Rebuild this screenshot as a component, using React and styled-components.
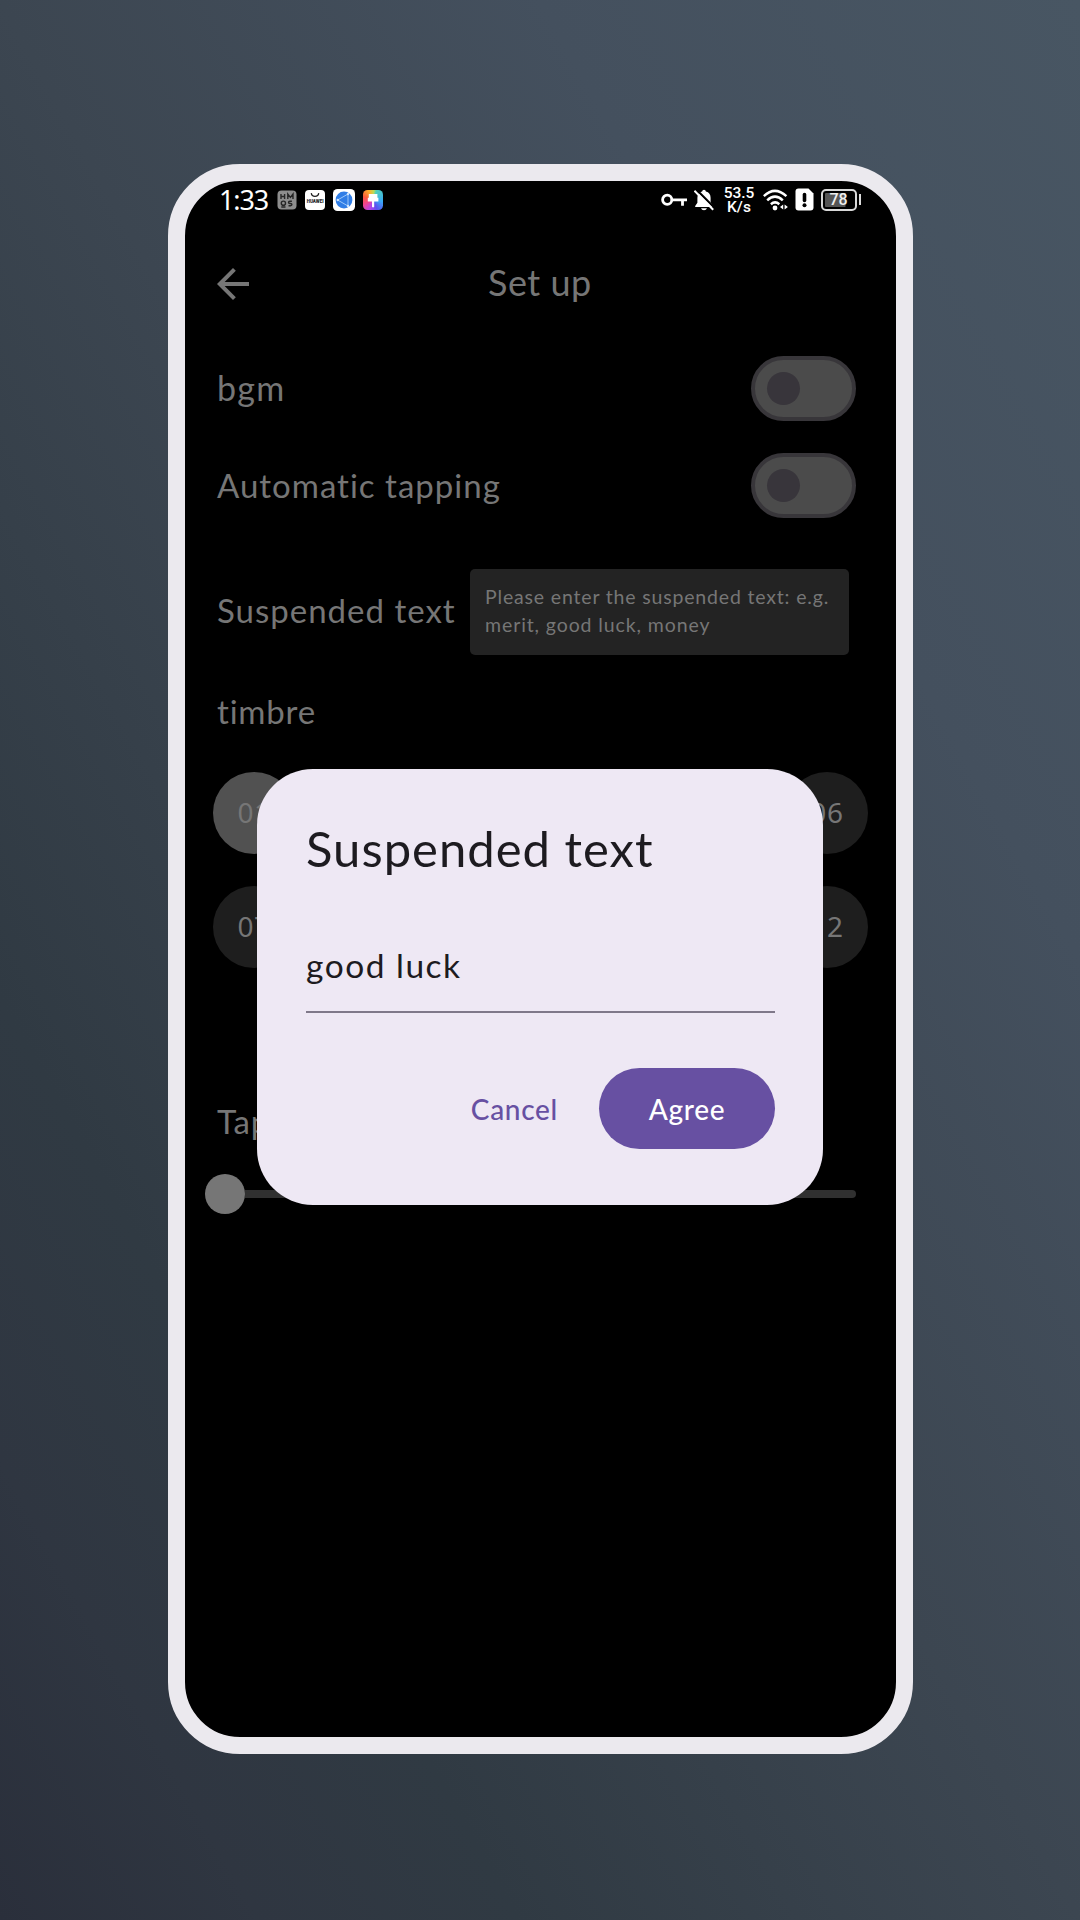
import React from "react";
import styled, { createGlobalStyle } from "styled-components";

const Global = createGlobalStyle`
  * { box-sizing: border-box; }
  body { margin: 0; font-family: Lato, "Open Sans", sans-serif; }
`;

const Backdrop = styled.main`
  width: 1080px;
  height: 1920px;
  padding: 164px 0 0 168px;
  background: linear-gradient(to top right, #2a2f3b 0%, #2f3641 12%, #303a43 24%, #3c4651 50%, #44505e 75%, #485663 100%);
`;

const Phone = styled.div`
  position: relative;
  width: 745px;
  height: 1590px;
  border: 17px solid #ebe9ee;
  border-radius: 72px;
  background: #000;
`;

const Text = styled.span`
  display: block;
  white-space: nowrap;
  font-size: ${(p) => p.$size}px;
  line-height: ${(p) => p.$line || 40}px;
  letter-spacing: ${(p) => p.$spacing || 0}px;
  color: ${(p) => p.$color || "#767676"};
  font-weight: ${(p) => p.$weight || 400};
`;

const StatusText = styled(Text)`
  font-family: Roboto, sans-serif;
`;

const DigitText = styled(Text)`
  font-family: "Noto Sans", sans-serif;
`;

const StatusBar = styled.header`
  display: flex;
  align-items: center;
  justify-content: space-between;
  height: 37px;
  padding: 0 35px 0 34px;
  color: #fff;
`;

const StatusGroup = styled.div`
  display: flex;
  align-items: center;
  gap: ${(p) => p.$gap}px;
`;

const AppIcons = styled.div`
  display: flex;
  align-items: center;
  gap: 8px;
  margin-left: 9px;
`;

const Speed = styled.div`
  display: flex;
  flex-direction: column;
  align-items: center;
  width: 31px;
  margin: 1px 1px 0 3px;
`;

const TitleBar = styled.div`
  display: flex;
  align-items: center;
  height: 64px;
  margin-top: 34px;
  padding-left: 24px;
`;

const TitleSlot = styled.div`
  margin: -4px 0 0 231px;
`;

const Row = styled.section`
  display: flex;
  align-items: center;
  justify-content: space-between;
  height: ${(p) => p.$height}px;
  margin-top: ${(p) => p.$top}px;
  padding: 0 ${(p) => p.$right || 40}px 0 32px;
`;

const Label = styled(Text)`
  padding-bottom: ${(p) => p.$lift ?? 3}px;
`;

const Toggle = styled.div`
  display: flex;
  align-items: center;
  width: 105.5px;
  height: 65px;
  padding-left: 12px;
  border: 4px solid #38363a;
  border-radius: 33px;
  background: #4b4b4b;
`;

const Knob = styled.div`
  width: 33px;
  height: 33px;
  border-radius: 50%;
  background: #38353b;
`;

const Field = styled.div`
  width: 379px;
  height: 86px;
  padding: 14px 0 0 15px;
  border-radius: 5px;
  background: #232323;
`;

const Grid = styled.section`
  display: grid;
  grid-template-columns: repeat(6, 82px);
  justify-content: space-between;
  row-gap: 32px;
  margin: 40px 28px 0 28px;
`;

const Chip = styled.div`
  display: flex;
  align-items: center;
  justify-content: center;
  height: 82px;
  padding-bottom: 2px;
  border-radius: 50%;
  background: ${(p) => (p.$active ? "#515151" : "#1e1e1e")};
`;

const Slider = styled.div`
  display: flex;
  align-items: center;
  height: 40px;
  margin: 31px 40px 0 20px;
`;

const Thumb = styled.div`
  width: 40px;
  height: 40px;
  border-radius: 50%;
  background: #767676;
`;

const Track = styled.div`
  flex: 1;
  height: 8px;
  border-radius: 0 4px 4px 0;
  background: #303030;
`;

const Dialog = styled.div`
  position: absolute;
  left: 72px;
  top: 588px;
  width: 566px;
  height: 436px;
  padding: 49px 48px 0 49px;
  border-radius: 56px;
  background: #eee8f4;
`;

const Underline = styled.div`
  height: 108px;
  margin-top: 27px;
  padding-top: 40px;
  border-bottom: 2px solid #7f7889;
`;

const Actions = styled.div`
  display: flex;
  align-items: center;
  justify-content: flex-end;
  gap: 41px;
  margin-top: 55px;
`;

const Primary = styled.div`
  display: flex;
  align-items: center;
  justify-content: center;
  width: 176px;
  height: 81px;
  border-radius: 41px;
  background: #6750a2;
`;

const HmosIcon = () => (
  <svg width="20" height="20" viewBox="0 0 20 20">
    <rect x="0.5" y="0.5" width="19" height="19" rx="4" fill="#8d8d8d" />
    <g fill="none" stroke="#262626" strokeWidth="1.4">
      <path d="M4 4v5M7.6 4v5M4 6.5h3.6M10.8 9V4l2.6 3.4L16 4v5" />
      <circle cx="6.4" cy="13.2" r="2.1" />
      <path d="M4.3 17h4.2M14.9 11.3h-2q-1.4 0-1.4 1.1t1.4 1.1h.6q1.4 0 1.4 1.1t-1.4 1.1h-2" />
    </g>
  </svg>
);

const StoreMark = styled.span`
  display: block;
  width: 20px;
  font: 900 4.5px/5px Roboto, sans-serif;
  text-align: center;
  color: #222;
`;

const StoreTile = styled.div`
  width: 20px;
  height: 20px;
  border-radius: 4px;
  background: #fff;

  svg { display: block; }
`;

const StoreIcon = () => (
  <StoreTile>
    <svg width="20" height="9" viewBox="0 0 20 9">
      <path d="M6.3 3.2c.5 4.3 6.9 4.3 7.4 0" fill="none" stroke="#222" strokeWidth="1.3" />
    </svg>
    <StoreMark>HUAWEI</StoreMark>
  </StoreTile>
);

const GlobeIcon = () => (
  <svg width="22" height="22" viewBox="0 0 22 22">
    <rect width="22" height="22" rx="4.5" fill="#fff" />
    <circle cx="11" cy="11" r="8.4" fill="#2f7de6" />
    <path d="M4.6 11 15 5v12z" fill="none" stroke="#a9d0fb" strokeWidth="0.9" />
    <circle cx="4.8" cy="11" r="1.2" fill="#cfe6ff" />
    <circle cx="15" cy="5" r="1.2" fill="#cfe6ff" />
    <circle cx="15" cy="17" r="1.2" fill="#cfe6ff" />
  </svg>
);

const Rainbow = styled.div`
  width: 20px;
  height: 20px;
  border-radius: 4.5px;
  background: conic-gradient(from 20deg at 50% 50%, #4fd0b8, #38a8f5 22%, #5b50f0 38%, #b943e6 50%, #f0458f 62%, #fb5b3d 75%, #fcb32c 88%, #b8dc58 96%, #4fd0b8);
`;

const ThemeIcon = () => (
  <Rainbow>
    <svg width="20" height="20" viewBox="0 0 20 20">
      <path d="M5.8 4h8.6v4H5.8zM4.8 7.8h10.6v3.7h-4.2v5.3q-1.1 1.3-2.2 0v-5.3H4.8z" fill="#fff" />
    </svg>
  </Rainbow>
);

const KeyIcon = () => (
  <svg width="26" height="14" viewBox="0 0 26 14">
    <g fill="none" stroke="#fff" strokeWidth="2.8">
      <circle cx="6.2" cy="6.8" r="4.6" />
      <path d="M10.8 6.8H26M21.5 6.8v6" />
    </g>
  </svg>
);

const BellOffIcon = () => (
  <svg width="20" height="22" viewBox="0 0 20 22">
    <path d="M10 .7q1.7 0 1.9 1.7 4.7 1.2 4.7 6.3v4.6L18.8 17v1H1.2v-1l2.2-3.2V8.7q0-5.1 4.7-6.3Q8.3 .7 10 .7z" fill="#fff" />
    <path d="M7 19.2h6q-.7 2.1-3 2.1t-3-2.1z" fill="#fff" />
    <path d="M1.8 0 20.5 18.8" stroke="#000" strokeWidth="2.2" />
    <path d="M.4 1.8 19.2 20.8" stroke="#fff" strokeWidth="2" />
  </svg>
);

const WifiIcon = () => (
  <svg width="25" height="22" viewBox="0 0 25 22">
    <g fill="none" stroke="#fff" strokeWidth="2.5">
      <path d="M.8 7.1q11-10.5 22.6 0M4.2 11.3q7.8-7.3 15.6 0M7.9 15.2q4.2-3.7 8.4 0" />
    </g>
    <circle cx="12" cy="19" r="2.4" fill="#fff" />
    <path d="M20.2 15.6v5L17 18.1zM21.6 15.6v5l3.3-2.5z" fill="#fff" />
  </svg>
);

const SimIcon = () => (
  <svg width="19" height="23" viewBox="0 0 19 23">
    <path d="M3.5 .5h10L18.5 5.5V19.5q0 3-3 3H3.5q-3 0-3-3V3.5q0-3 3-3z" fill="#fff" />
    <path d="M9.5 6.5v6" stroke="#000" strokeWidth="3.6" strokeLinecap="round" />
    <circle cx="9.5" cy="17.3" r="2" fill="#000" />
  </svg>
);

const Battery = styled.div`
  display: flex;
  align-items: center;
  gap: 2px;
`;

const Cell = styled.div`
  display: flex;
  align-items: center;
  justify-content: center;
  width: 36px;
  height: 22px;
  padding: 2px;
  border: 2px solid #d8d8d8;
  border-radius: 5px;
  background: linear-gradient(90deg, #555 0 70%, #000 76%) content-box;
`;

const Tip = styled.div`
  width: 2.5px;
  height: 11px;
  background: #ddd;
`;

const BackIcon = () => (
  <svg width="48" height="48" viewBox="0 0 24 24">
    <path d="M20 11H7.83l5.59-5.59L12 4l-8 8 8 8 1.41-1.41L7.83 13H20v-2z" fill="#767676" />
  </svg>
);

const chips = Array.from({ length: 12 }, (_, i) => String(i + 1).padStart(2, "0"));

export default function App() {
  return (
    <>
      <Global />
      <Backdrop>
        <Phone>
          <StatusBar>
            <StatusGroup $gap={0}>
              <DigitText $size={27} $line={34} $spacing={-1.1} $color="#fff">1:33</DigitText>
              <AppIcons>
                <HmosIcon />
                <StoreIcon />
                <GlobeIcon />
                <ThemeIcon />
              </AppIcons>
            </StatusGroup>
            <StatusGroup $gap={7}>
              <KeyIcon />
              <BellOffIcon />
              <Speed>
                <StatusText $size={15.5} $line={14.5} $weight={500} $color="#fff">53.5</StatusText>
                <StatusText $size={15.5} $line={14.5} $weight={500} $color="#fff">K/s</StatusText>
              </Speed>
              <WifiIcon />
              <SimIcon />
              <Battery>
                <Cell><StatusText $size={16} $line={18} $weight={500} $color="#eee">78</StatusText></Cell>
                <Tip />
              </Battery>
            </StatusGroup>
          </StatusBar>
          <TitleBar>
            <BackIcon />
            <TitleSlot><Text $size={36} $spacing={0.5}>Set up</Text></TitleSlot>
          </TitleBar>
          <Row $height={65} $top={40}>
            <Label $size={34} $spacing={1.3} $lift={1}>bgm</Label>
            <Toggle><Knob /></Toggle>
          </Row>
          <Row $height={65} $top={32}>
            <Label $size={33} $spacing={1} $lift={2}>Automatic tapping</Label>
            <Toggle><Knob /></Toggle>
          </Row>
          <Row $height={86} $top={51} $right={47}>
            <Label $size={33} $spacing={1} $lift={4}>Suspended text</Label>
            <Field>
              <Text $size={19.5} $line={28} $spacing={0.83}>Please enter the suspended text: e.g.</Text>
              <Text $size={19.5} $line={28} $spacing={0.9}>merit, good luck, money</Text>
            </Field>
          </Row>
          <Row $height={40} $top={37}>
            <Label $size={33} $spacing={0.8}>timbre</Label>
          </Row>
          <Grid>
            {chips.map((label, i) => (
              <Chip key={label} $active={i === 0}>
                <DigitText $size={28} $spacing={0.6}>{label}</DigitText>
              </Chip>
            ))}
          </Grid>
          <Row $height={40} $top={135}>
            <Label $size={33} $spacing={0.8} $lift={5}>Tapping speed</Label>
          </Row>
          <Slider>
            <Thumb />
            <Track />
          </Slider>
          <Dialog>
            <Text $size={49} $line={60} $spacing={1} $color="#1d1b20">Suspended text</Text>
            <Underline>
              <Text $size={33.5} $spacing={1.5} $color="#1d1b20">good luck</Text>
            </Underline>
            <Actions>
              <Text $size={28} $spacing={0.7} $weight={500} $color="#6750a2">Cancel</Text>
              <Primary><Text $size={28} $spacing={0.7} $weight={500} $color="#fff">Agree</Text></Primary>
            </Actions>
          </Dialog>
        </Phone>
      </Backdrop>
    </>
  );
}
